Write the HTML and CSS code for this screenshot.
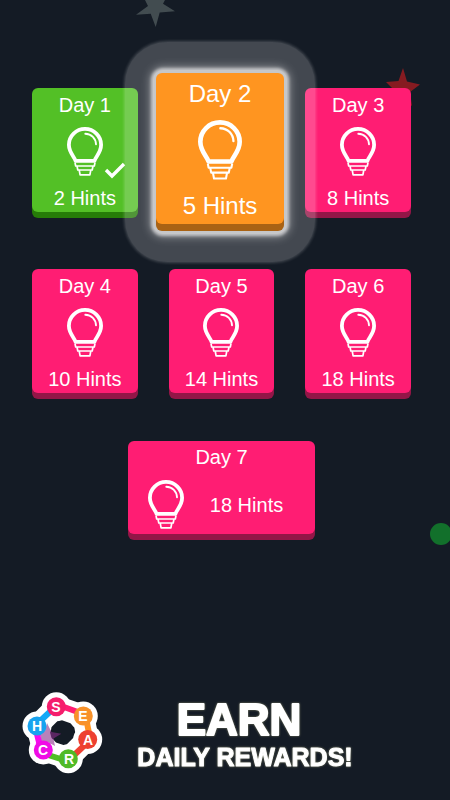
FILE: index.html
```html
<!DOCTYPE html>
<html lang="en">
<head>
<meta charset="utf-8">
<meta name="viewport" content="width=device-width, initial-scale=1">
<title>Daily Rewards</title>
<link rel="stylesheet" href="styles.css">
</head>
<body>
<svg class="symbols" aria-hidden="true">
  <symbol id="bulb" viewBox="0 0 36 49">
    <g fill="none" stroke="currentColor" stroke-linejoin="round">
      <path stroke-width="3.8" d="M8.6 33.9 C7.4 29.6 1.9 25.6 1.9 17.8 A16.1 15.9 0 0 1 34.1 17.8 C34.1 25.6 28.6 29.6 27.4 33.9 Z"/>
      <path stroke-width="1.9" stroke-linecap="round" d="M18.300 6.700 C24.500 6.900 28.700 11.300 29 17.200"/>
      <path stroke-width="1.7" d="M8 35.500 L8.700 39 H27.300 L28 35.500 M10 39 L10.800 43 H25.200 L26 39 M12.200 43 L13.100 47.800 H22.900 L23.800 43"/>
    </g>
  </symbol>
</svg>
<div class="decor" aria-hidden="true">
  <svg class="star-gray" viewBox="0 0 40 28"><path fill="#424c50" d="M9 0 L12 6 L0 14.7 L14.7 13.7 L19.7 27 L23.7 12.5 L39 11.3 L27 3.7 L29 0 Z"/></svg>
  <svg class="star-red" viewBox="0 0 36 40"><path fill="#861b21" d="M18 0 L22 13.500 L35 16.500 L25 24 L27 38 L16 29 L5 34 L9 22 L1 14 L13.5 13 Z"/></svg>
  <span class="dot"></span>
</div>
<main class="rewards">
  <ul class="days">
    <li class="day"><button class="card card-claimed">
      <span class="label">Day 1</span><svg class="bulb"><use href="#bulb"/></svg><span class="label">2 Hints</span>
      <svg class="check" viewBox="0 0 22 17"><path d="M2 8 L8 14 L20 2" fill="none" stroke="#fff" stroke-width="3.4"/></svg>
    </button></li>
    <li class="day day-today"><button class="card card-today">
      <span class="label">Day 2</span><svg class="bulb"><use href="#bulb"/></svg><span class="label">5 Hints</span>
    </button></li>
    <li class="day"><button class="card">
      <span class="label">Day 3</span><svg class="bulb"><use href="#bulb"/></svg><span class="label">8 Hints</span>
    </button></li>
    <li class="day"><button class="card">
      <span class="label">Day 4</span><svg class="bulb"><use href="#bulb"/></svg><span class="label">10 Hints</span>
    </button></li>
    <li class="day"><button class="card">
      <span class="label">Day 5</span><svg class="bulb"><use href="#bulb"/></svg><span class="label">14 Hints</span>
    </button></li>
    <li class="day"><button class="card">
      <span class="label">Day 6</span><svg class="bulb"><use href="#bulb"/></svg><span class="label">18 Hints</span>
    </button></li>
  </ul>
  <button class="card card-wide">
    <span class="label">Day 7</span>
    <span class="prize"><svg class="bulb"><use href="#bulb"/></svg><span class="label">18 Hints</span></span>
  </button>
</main>
<footer class="footer">
  <svg class="logo" viewBox="22 692 82 84" role="img" aria-label="Search">
    <path d="M56.300 706.700 L83.300 716 L87.700 739 L68.300 758.300 L43.300 750 L37 726 Z" fill="none" stroke="#fff" stroke-width="22" stroke-linejoin="round"/>
    <g fill="#fff"><circle cx="56.300" cy="706.700" r="14.500"/><circle cx="83.300" cy="716" r="14.500"/><circle cx="87.700" cy="739.500" r="14.500"/><circle cx="68.300" cy="758.800" r="14.500"/><circle cx="43.300" cy="750" r="14.500"/><circle cx="37" cy="726" r="14.500"/></g>
    <path d="M61.300 733.700 L53.500 738.500 L55 746 L47.500 742 L39 747 L41 737 L35 731 L45 731 L47 723 L51.500 732 Z" fill="#8a2f8c" fill-opacity=".6"/>
    <g fill="none" stroke-width="6">
      <path stroke="#ff1d73" d="M57 704.500 L82 713.500"/><path stroke="#ff941f" d="M86 718 L90 738"/><path stroke="#ef4132" d="M88 742 L70 759"/><path stroke="#50bf26" d="M67 761 L45 754"/><path stroke="#f90bee" d="M41 750 L36 730"/><path stroke="#12a8f7" d="M37 724 L55 707"/>
    </g>
    <circle cx="56.300" cy="706.700" r="9.500" fill="#f51d6c"/><circle cx="83.300" cy="716" r="9.500" fill="#f8922a"/><circle cx="87.700" cy="739.500" r="9.500" fill="#ed4030"/><circle cx="68.300" cy="758.800" r="9.500" fill="#4fba27"/><circle cx="43.300" cy="750" r="9.500" fill="#f00be6"/><circle cx="37" cy="726" r="9.500" fill="#18a3ef"/>
    <g class="logo-letters"><text x="56" y="712">S</text><text x="83" y="721">E</text><text x="88" y="745">A</text><text x="69" y="764">R</text><text x="43" y="755">C</text><text x="37" y="731">H</text></g>
  </svg>
  <h1 class="headline">
    <svg class="headline-art" viewBox="0 0 220 80">
      <text class="headline-big" x="105" y="41">EARN</text>
      <text class="headline-small" x="111" y="72">DAILY REWARDS!</text>
    </svg>
  </h1>
</footer>
</body>
</html>
```
FILE: styles.css
```css
* { box-sizing: border-box; }

body {
  position: relative;
  display: flex;
  flex-direction: column;
  min-height: 100vh;
  margin: 0;
  overflow-x: hidden;
  background: #141b25;
  color: #fff;
  font-family: "Liberation Sans", Arial, sans-serif;
}

.symbols { position: absolute; width: 0; height: 0; }

.decor { position: absolute; inset: 0; overflow: hidden; z-index: -1; }
.star-gray { position: absolute; top: 0; left: 136px; width: 40px; height: 28px; }
.star-red { position: absolute; top: 68px; right: 29px; width: 36px; height: 40px; }
.dot {
  position: absolute;
  top: 523px;
  right: -2px;
  width: 22px;
  height: 22px;
  border-radius: 50%;
  background: #12702b;
}

.rewards {
  display: flex;
  flex-direction: column;
  align-items: center;
  gap: 48px;
  padding: 88px 39px 40px 32px;
}

.days {
  display: grid;
  grid-template-columns: repeat(3, 1fr);
  gap: 57px 31px;
  width: 100%;
  margin: 0;
  padding: 0;
  list-style: none;
}

.card {
  position: relative;
  display: flex;
  flex-direction: column;
  align-items: center;
  gap: 10px;
  width: 100%;
  padding: 5px 0 2px;
  border: 0;
  border-radius: 6px;
  background: #ff1d73;
  box-shadow: 0 6px 0 #931647;
  color: #fff;
  font: 20px/24px "Liberation Sans", Arial, sans-serif;
  cursor: pointer;
}

.bulb { display: block; width: 36px; height: 49px; }

.card-claimed { background: #53c026; box-shadow: 0 6px 0 #267c08; }
.check { position: absolute; right: 12px; top: 74px; width: 22px; height: 17px; }

.day-today {
  position: relative;
  z-index: 1;
  margin: -15px -10px -12px -13px;
}
.day-today::before {
  content: "";
  position: absolute;
  inset: -31px;
  bottom: -38px;
  border-radius: 42px;
  background: rgba(255, 255, 255, 0.2);
  box-shadow: 0 0 3px 1px rgba(255, 255, 255, 0.2);
}
.day-today::after {
  content: "";
  position: absolute;
  inset: -3px;
  bottom: -10px;
  z-index: 0;
  border-radius: 10px;
  background: #c6c7c9;
  box-shadow: 0 0 3px 2px #c0c1c4, 0 0 10px 3px rgba(255, 255, 255, 0.4);
}
.card-today {
  z-index: 1;
  gap: 11px;
  padding: 6px 0 3px;
  background: #ff9520;
  box-shadow: 0 7px 0 #a96214;
  font-size: 24px;
  line-height: 30px;
}
.card-today .bulb { width: 44px; height: 60px; }

.card-wide { gap: 11px; width: 187px; padding: 4px 0 5px; }
.prize { display: flex; align-items: center; gap: 26px; padding-right: 12px; }

.footer {
  display: flex;
  align-items: center;
  justify-content: space-between;
  margin-top: auto;
  padding: 0 96px 24px 22px;
}
.logo { width: 82px; height: 84px; }
.logo-letters {
  fill: #fff;
  font-size: 14px;
  font-weight: bold;
  text-anchor: middle;
}

.headline { margin: 0; }
.headline-art {
  display: block;
  width: 220px;
  height: 80px;
  fill: #fff;
  stroke: #fff;
  stroke-linejoin: round;
  text-anchor: middle;
  font-weight: bold;
  filter: drop-shadow(0 0 1px #77795f);
}
.headline-big { font-size: 44px; stroke-width: 2px; }
.headline-small { font-size: 25px; stroke-width: 1px; }
```
